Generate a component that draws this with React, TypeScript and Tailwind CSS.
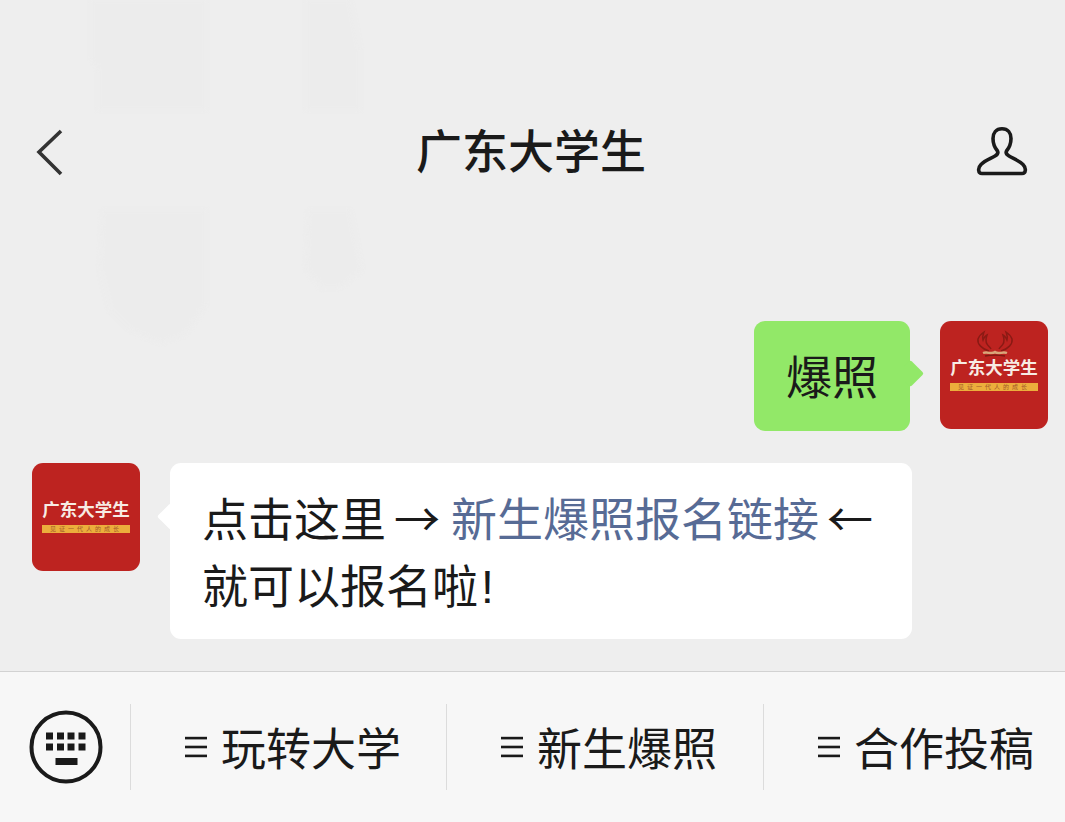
const font = "font-['Liberation_Sans','Noto_Sans_CJK_SC',sans-serif]";

const BackIcon = () => (
  <svg width="30" height="48" viewBox="0 0 30 48" fill="none" stroke="#333" strokeWidth="3.6">
    <path d="M26 3 L4 24 L26 46" />
  </svg>
);

const UserIcon = () => (
  <svg width="56" height="54" viewBox="0 0 56 54" fill="none" stroke="#1a1a1a" strokeWidth="3.6" strokeLinejoin="round">
    <path d="M27 3.8 C21 3.8 18 8 18 13.5 C18 19 20 23 22.5 26 C23.5 28 22.5 29.5 20 31 C16 33.5 10 35.5 6 39.5 C2.5 43 3 48.5 7 48.5 L47 48.5 C51 48.5 51.5 43 48 39.5 C44 35.5 38 33.5 34 31 C31.5 29.5 30.5 28 31.5 26 C34 23 36 19 36 13.5 C36 8 33 3.8 27 3.8 Z" />
  </svg>
);

const KeyboardIcon = () => (
  <svg width="74" height="74" viewBox="0 0 74 74" fill="#1a1a1a">
    <circle cx="37" cy="37" r="34.5" fill="none" stroke="#1a1a1a" strokeWidth="4" />
    {[17, 28, 38.5, 49.5].map((x) => (
      <g key={x}>
        <rect x={x} y="22.5" width="7" height="7" />
        <rect x={x} y="33.5" width="7" height="7" />
      </g>
    ))}
    <rect x="26.5" y="48" width="22" height="7" />
  </svg>
);

const Antlers = () => (
  <svg width="38" height="30" viewBox="0 0 38 30" fill="none" stroke="#8a1a14" strokeWidth="1.5" className="absolute left-[36px] top-[9px]">
    <path d="M13 21 C6 19 1 14 2 9 C3 6 5 4 8 2 C7 5 6 7 7 10 C8 7 9 6 11 5 C10 8 9 11 11 14 C12 16 14 17 15 19" />
    <path d="M25 21 C32 19 37 14 36 9 C35 6 33 4 30 2 C31 5 32 7 31 10 C30 7 29 6 27 5 C28 8 29 11 27 14 C26 16 24 17 23 19" />
    <path d="M7 23 C12 21 15 25 19 22 C23 25 26 21 31 23" strokeWidth="2.4" stroke="#d9a679" />
    <path d="M9 26 C14 25 24 25 29 26" strokeWidth="1.4" stroke="#7c1a12" />
  </svg>
);

const Avatar = ({ antlers }: { antlers?: boolean }) => (
  <div className="relative flex h-[108px] w-[108px] shrink-0 flex-col items-center rounded-[11px] bg-[#bd2320]">
    {antlers && <Antlers />}
    <div className="mt-[36px] whitespace-nowrap text-[17.5px] font-bold leading-[22px] text-[#f7ece4]">广东大学生</div>
    <div className="mt-[4px] flex h-[8px] w-[88px] items-center justify-center overflow-hidden whitespace-nowrap bg-[#ecae3c] text-[6px] leading-[8px] tracking-[3px] text-[#a3582a]">
      见证一代人的成长
    </div>
  </div>
);

const MenuItem = ({ label, width }: { label: string; width: string }) => (
  <div className={`${width} flex h-[86px] items-center gap-[14px] border-l border-[#dcdcdc] pl-[54px]`}>
    <svg width="22" height="22" viewBox="0 0 22 22" fill="#1a1a1a">
      <rect y="0.8" width="22" height="2.6" />
      <rect y="9.7" width="22" height="2.6" />
      <rect y="18.6" width="22" height="2.6" />
    </svg>
    <span className="pt-[7px] text-[45px] leading-none whitespace-nowrap text-[#1a1a1a]">{label}</span>
  </div>
);

export default function App() {
  return (
    <div className={`${font} relative flex h-[822px] w-[1065px] flex-col overflow-hidden bg-[#eeeeee] text-[#1a1a1a]`}>
      {/* faint ghost shapes behind the chat */}
      <svg width="340" height="350" viewBox="0 0 340 350" fill="#ececec" className="absolute left-[60px] top-0 blur-[2px]">
        <path d="M31 0 L146 0 L146 110 L38 110 L38 70 L31 60 Z" />
        <path d="M246 0 L290 0 L300 50 L300 110 L246 110 Z" />
        <path d="M42 210 L146 210 L146 305 L125 335 L100 343 L70 330 L50 310 L40 270 Z" />
        <path d="M248 210 L290 210 L302 270 L280 288 L262 288 L246 270 Z" />
      </svg>

      <header className="relative flex h-[304px] shrink-0 items-center justify-between pl-[35px] pr-[34px]">
        <BackIcon />
        <h1 className="absolute left-0 right-[3px] text-center text-[46px] font-medium leading-none">广东大学生</h1>
        <UserIcon />
      </header>

      <main className="relative flex flex-1 flex-col gap-[32px] pl-[32px] pr-[17px] pt-[17px]">
        <div className="flex justify-end gap-[30px]">
          <div className="relative flex h-[110px] w-[156px] items-center justify-center rounded-[11px] bg-[#92e868] pt-[5px] text-[46px]">
            爆照
            <span className="absolute right-[-9.5px] top-[43px] h-[19px] w-[19px] rotate-45 rounded-[2px] bg-[#92e868]" />
          </div>
          <Avatar antlers />
        </div>
        <div className="flex gap-[30px]">
          <Avatar />
          <div className="relative h-[176px] w-[742px] rounded-[11px] bg-white pl-[32px] pt-[20px] text-[46px] leading-[67px]">
            <span className="absolute left-[-9.5px] top-[44px] h-[19px] w-[19px] rotate-45 rounded-[2px] bg-white" />
            <div className="whitespace-nowrap">
              点击这里<span className="ml-[8px] mr-[11px] font-['Noto_Sans_CJK_SC']">→</span>
              <span className="text-[#576b95]">新生爆照报名链接</span>
              <span className="ml-[8px] font-['Noto_Sans_CJK_SC']">←</span>
            </div>
            <div className="whitespace-nowrap">
              就可以报名啦<span className="ml-[3px]">!</span>
            </div>
          </div>
        </div>
      </main>

      <footer className="flex h-[151px] shrink-0 items-center border-t border-[#d2d2d2] bg-[#f7f7f7]">
        <div className="flex w-[130px] justify-center pl-[2px]">
          <KeyboardIcon />
        </div>
        <MenuItem label="玩转大学" width="w-[316px]" />
        <MenuItem label="新生爆照" width="w-[317px]" />
        <MenuItem label="合作投稿" width="w-[302px]" />
      </footer>
    </div>
  );
}
